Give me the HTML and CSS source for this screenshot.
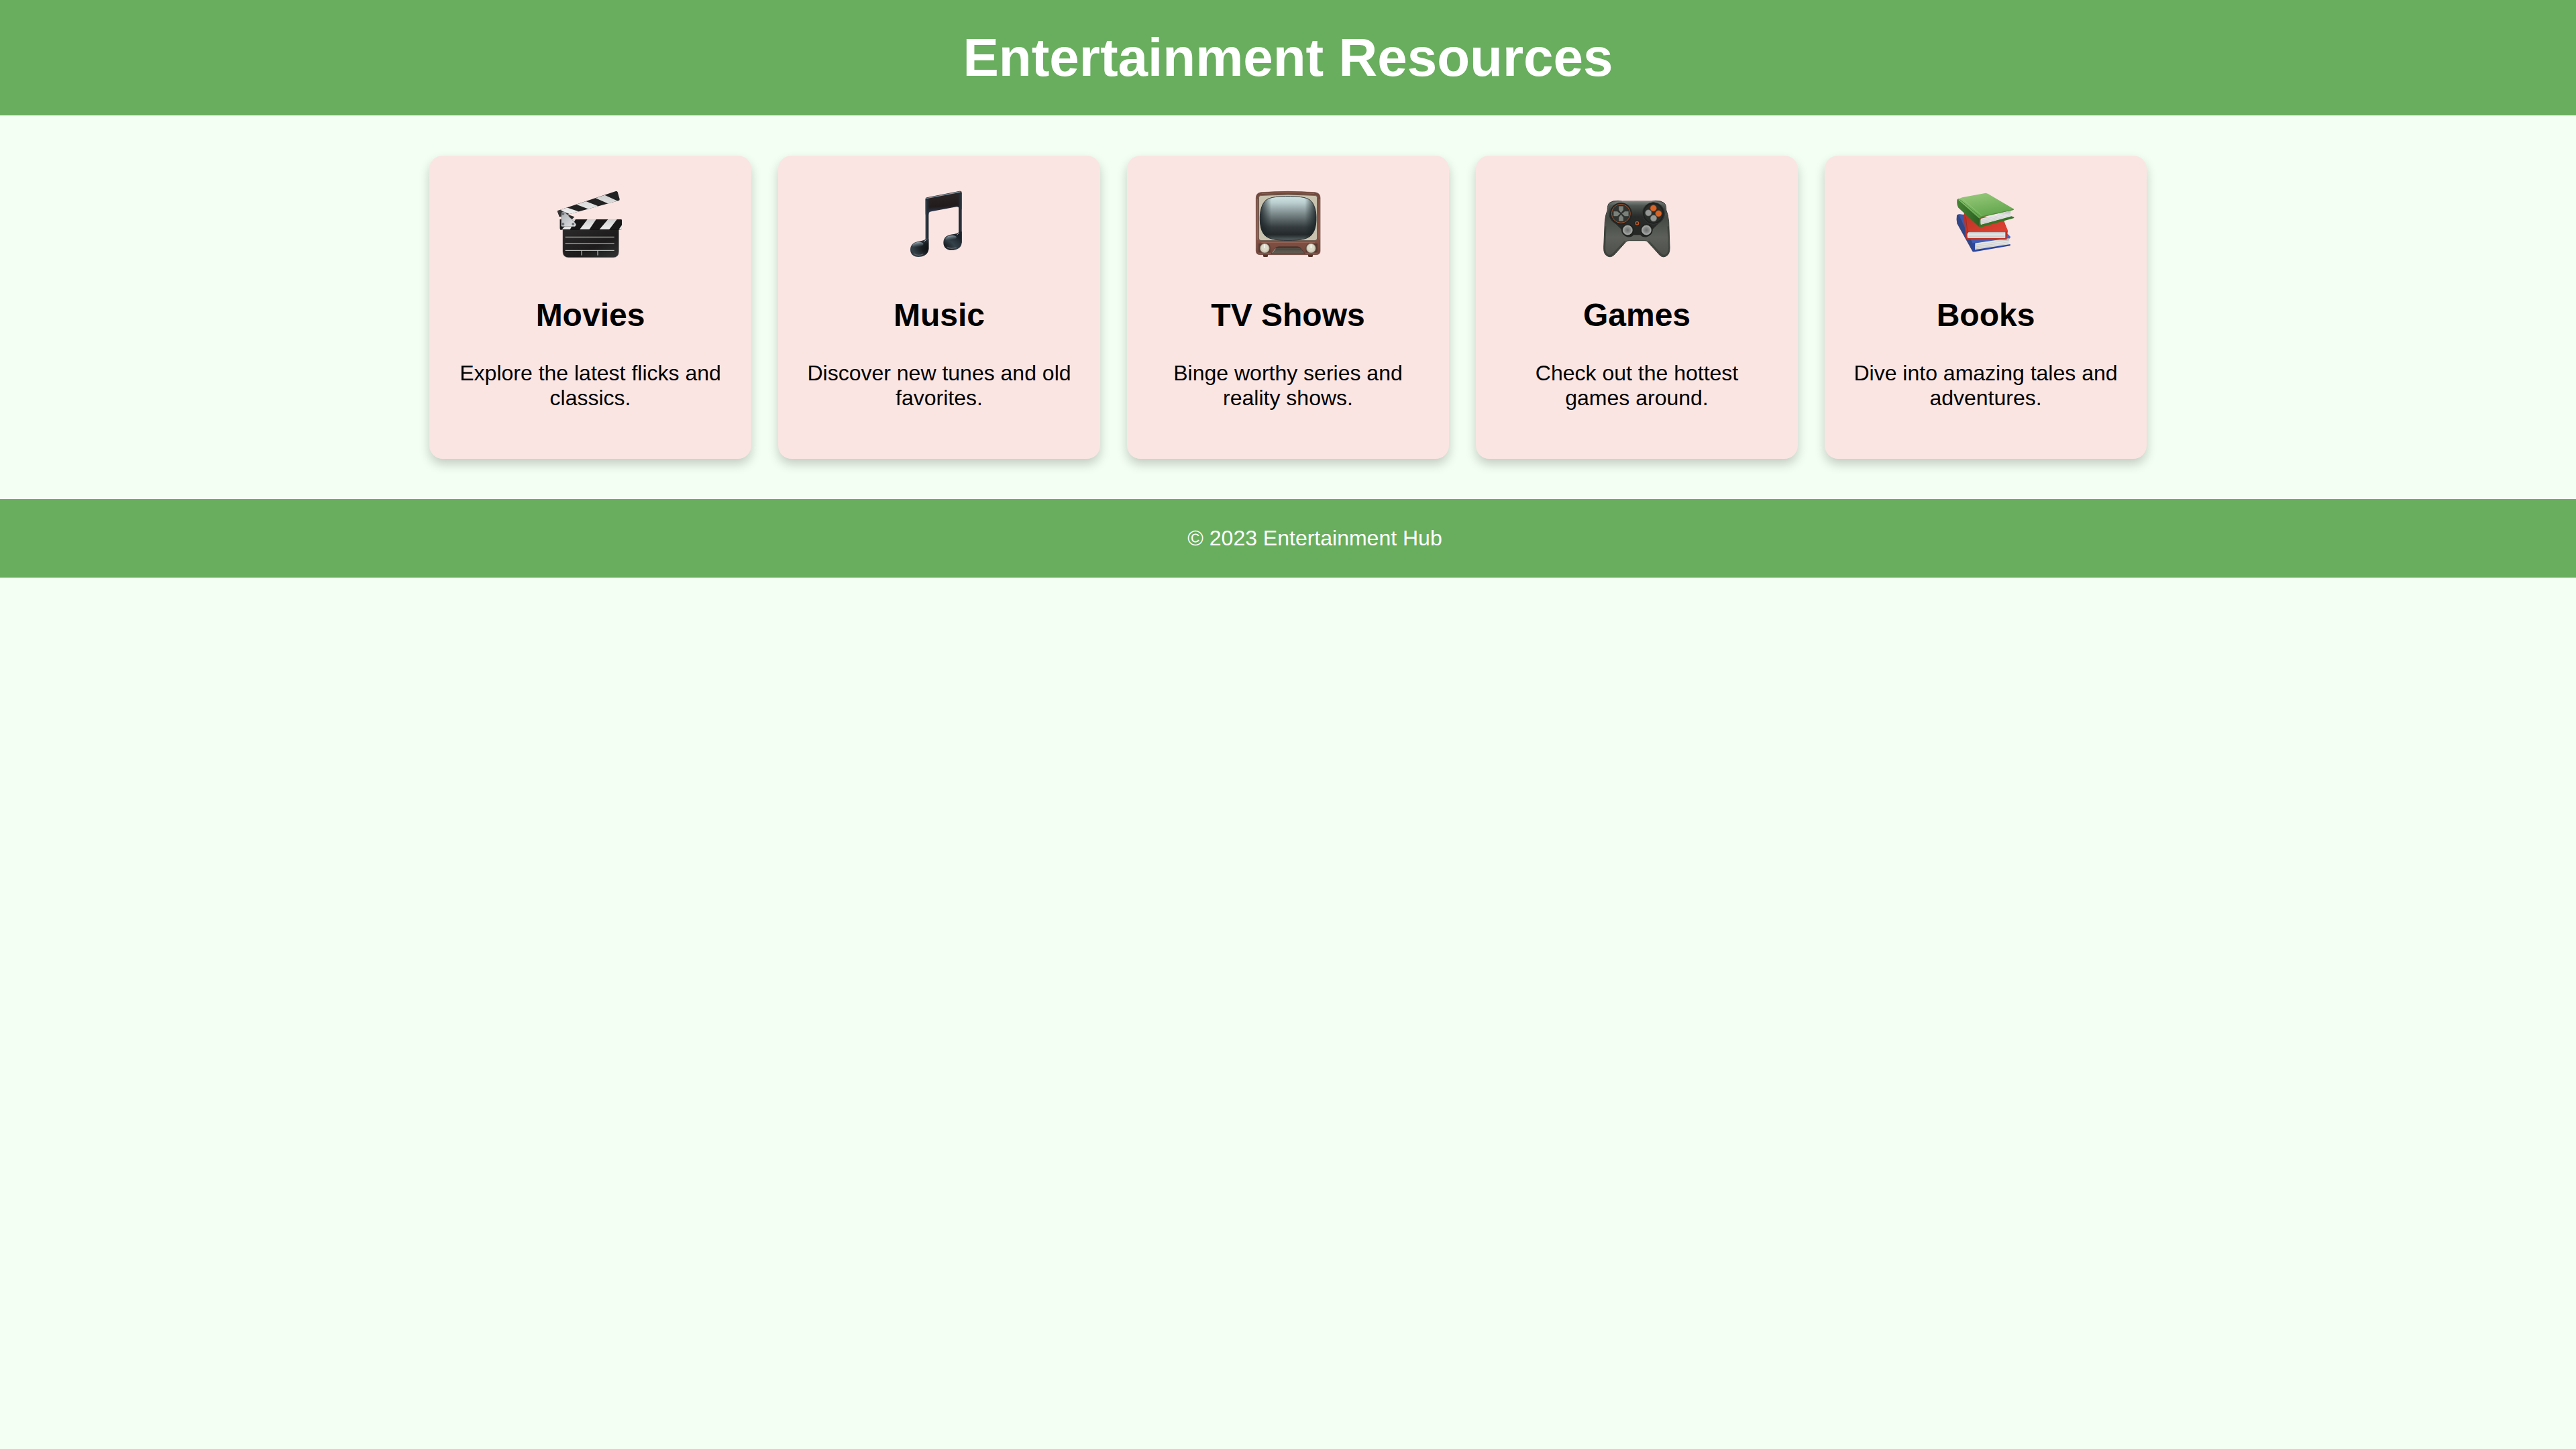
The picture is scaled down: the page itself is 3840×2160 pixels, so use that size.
FILE: index.html
```
<!DOCTYPE html>
<html lang="en">
<head>
<meta charset="utf-8">
<title>Entertainment Resources</title>
<link rel="stylesheet" href="styles.css">
</head>
<body>
<header class="header"><h1 class="header-title">Entertainment Resources</h1></header>
<main class="cards">
  <section class="card">
    <svg class="card-icon" viewBox="0 6 420 390" aria-hidden="true">
      <defs>
        <linearGradient id="stripe" x1="0" y1="0" x2="0" y2="1"><stop offset="0" stop-color="#cfcfcf"/><stop offset="1" stop-color="#f0f0f0"/></linearGradient>
        <linearGradient id="slate" x1="0" y1="0" x2="1" y2="1"><stop offset="0" stop-color="#2b2a2a"/><stop offset=".6" stop-color="#1d1b1b"/><stop offset="1" stop-color="#333"/></linearGradient>
        <linearGradient id="hinge" x1="0" y1="0" x2="1" y2="1"><stop offset="0" stop-color="#a9adb0"/><stop offset="1" stop-color="#e4e6e7"/></linearGradient>
        <clipPath id="arm"><path d="M62 133 324 45Q330 44 332 49L341 80Q342 85 337 87L72 160Z"/></clipPath>
        <clipPath id="bar"><path d="M73 171H347Q351 171 351 175V209Q351 217 344 217H80Q73 217 73 211Z"/></clipPath>
      </defs>
      <g clip-path="url(#arm)">
        <path fill="#222" d="M55 30H350V170H55Z"/>
        <path fill="url(#stripe)" d="M72 129 104 118 162 137 124 150ZM147 104 190 90 245 112 207 127ZM233 76 274 62 333 89 293 102Z"/>
        <path fill="#343434" d="M60 134 80 128 88 163H68Z"/>
      </g>
      <path fill="#292929" d="m112 150 27 10-10 10-17-8Z"/>
      <path fill="url(#slate)" stroke="#555" stroke-width="1.5" d="M87 214H337V315Q337 341 313 341H112Q87 341 87 315Z"/>
      <g clip-path="url(#bar)">
        <path fill="#171717" d="M70 168H354V219H70Z"/>
        <path fill="url(#stripe)" d="M82 217 126 171H144L119 217ZM162 217 197 171H236L205 217ZM250 217 289 171H329L294 217ZM337 217 352 195V217Z"/>
      </g>
      <path fill="none" stroke="#080808" stroke-width="2" d="M75 217H345"/>
      <path fill="url(#hinge)" stroke="#777" stroke-width="1.5" d="M81 144Q82 137 89 137 96 136 100 143L143 188Q148 194 144 200L140 203H84Q80 203 80 199Z"/>
      <g fill="#737779" stroke="#4d5052" stroke-width="1.5"><circle cx="88" cy="146" r="5"/><circle cx="88" cy="192" r="5"/><circle cx="133" cy="192" r="5"/></g>
      <g fill="none" stroke="#d5d9d6" stroke-width="3"><path d="M98 250H317M98 280H317M98 310H317"/><path d="M171 310V332M243 310V332"/></g>
    </svg>
    <h2 class="card-title">Movies</h2>
    <p class="card-text">Explore the latest flicks and classics.</p>
  </section>
  <section class="card">
    <svg class="card-icon" viewBox="0 6 420 390" aria-hidden="true">
      <defs>
        <radialGradient id="note" cx=".45" cy=".65" r=".65"><stop offset="0" stop-color="#090b0d"/><stop offset=".35" stop-color="#171c20"/><stop offset=".65" stop-color="#35424a"/><stop offset="1" stop-color="#1b2229"/></radialGradient>
        <linearGradient id="shine" x1="0" y1="0" x2="0" y2="1"><stop offset="0" stop-color="#91a4ad"/><stop offset=".6" stop-color="#4c5961" stop-opacity=".7"/><stop offset="1" stop-color="#23292e" stop-opacity="0"/></linearGradient>
        <linearGradient id="beam" x1="0" y1="0" x2=".12" y2="1"><stop offset="0" stop-color="#2e2728"/><stop offset=".7" stop-color="#221b1c"/><stop offset=".86" stop-color="#293344"/><stop offset="1" stop-color="#52647a"/></linearGradient>
      </defs>
      <path fill="url(#beam)" d="M149 79Q149 74 155 73L302 44Q311 43 311 51V127H299Q299 113 287 115L175 136Q163 137 163 149H149Z"/>
      <path fill="#232b33" d="M149 78H163V306H149ZM297 54H311V275H297Z"/>
      <path fill="none" stroke="#526472" stroke-width="2.5" d="M151 86V258M309 55V255"/>
      <path fill="none" stroke="#8297a2" stroke-width="4" stroke-linecap="round" d="M153 77 304 48"/>
      <path fill="url(#note)" d="M163 258V303C162 326 143 339 117 339 95 339 81 326 81 306 81 284 97 271 121 269 140 267 149 261 153 256ZM311 226V275C310 296 292 309 265 309 244 309 229 296 229 275 229 252 245 240 270 238 288 236 296 231 301 226Z"/>
      <g fill="url(#shine)"><ellipse cx="115" cy="285" rx="25" ry="12" transform="rotate(-10 115 285)"/><ellipse cx="263" cy="255" rx="25" ry="12" transform="rotate(-10 263 255)"/></g>
      <path fill="none" stroke="#b4c8d1" stroke-width="3" stroke-linecap="round" d="M143 270 152 262M290 240 299 232"/>
      <path fill="none" stroke="#5a5e61" stroke-width="4" stroke-linecap="round" d="M97 325Q115 336 137 327M246 295Q265 306 286 296"/>
    </svg>
    <h2 class="card-title">Music</h2>
    <p class="card-text">Discover new tunes and old favorites.</p>
  </section>
  <section class="card">
    <svg class="card-icon" viewBox="0 6 420 390" aria-hidden="true">
      <defs>
        <linearGradient id="screen" x1="0" y1="0" x2="0" y2="1"><stop offset="0" stop-color="#d1e5e5"/><stop offset=".14" stop-color="#bccfd0"/><stop offset=".4" stop-color="#7b898b"/><stop offset=".7" stop-color="#343b3e"/><stop offset=".87" stop-color="#24292b"/><stop offset="1" stop-color="#596466"/></linearGradient>
        <linearGradient id="vignette"><stop offset="0" stop-color="#182024" stop-opacity=".85"/><stop offset=".2" stop-color="#182024" stop-opacity="0"/><stop offset=".8" stop-color="#182024" stop-opacity="0"/><stop offset="1" stop-color="#182024" stop-opacity=".85"/></linearGradient>
        <linearGradient id="wood" x1="0" y1="0" x2="0" y2="1"><stop offset="0" stop-color="#70483b"/><stop offset=".7" stop-color="#8a5548"/><stop offset="1" stop-color="#70453a"/></linearGradient>
        <linearGradient id="grille" x1="0" y1="0" x2="0" y2="1"><stop offset="0" stop-color="#393631"/><stop offset="1" stop-color="#686156"/></linearGradient>
      </defs>
      <path fill="#553027" d="M99 327H120V336Q120 339 116 339H103Q99 339 99 335ZM300 327H321V335Q321 339 317 339H304Q300 339 300 335Z"/>
      <path fill="url(#wood)" stroke="#66443a" stroke-width="2" d="M67 75Q67 53 89 50Q210 42 331 50Q354 53 354 75V312Q354 329 336 329H85Q67 329 67 312Z"/>
      <path fill="none" stroke="#a47262" stroke-width="2" d="M73 80V263M349 80V263M92 55Q210 47 328 55M77 322H343M91 274H330"/>
      <path fill="#c9c2ae" stroke="#66564a" stroke-width="3" d="M79 74Q79 65 89 64Q210 56 331 64Q341 65 341 74V255Q341 266 330 266H90Q79 266 79 255Z"/>
      <path id="tube" fill="url(#screen)" stroke="#273034" stroke-width="3" d="M210 68C270 68 301 74 316 92 331 111 336 138 336 166 336 198 330 225 314 242 296 260 263 265 210 265 157 265 124 260 106 242 90 225 85 198 85 166 85 138 90 111 105 92 119 74 150 68 210 68Z"/>
      <path fill="url(#vignette)" d="M210 68C270 68 301 74 316 92 331 111 336 138 336 166 336 198 330 225 314 242 296 260 263 265 210 265 157 265 124 260 106 242 90 225 85 198 85 166 85 138 90 111 105 92 119 74 150 68 210 68Z"/>
      <path fill="#563b32" d="M78 279H117Q129 280 131 296V319H86Q78 319 78 311ZM303 279H342V311Q342 319 334 319H290V296Q292 281 303 279Z"/>
      <path fill="url(#grille)" stroke="#4b302a" stroke-width="2" d="M134 325 150 305Q155 293 169 293H252Q265 293 270 305L287 325Z"/>
      <path stroke="#777066" d="M149 309H272M144 316H278M155 302H265"/>
      <path fill="none" stroke="#aaa291" stroke-width="3" d="M140 320 154 302"/>
      <g fill="#d0cab9" stroke="#777061" stroke-width="2"><circle cx="106" cy="300" r="21"/><circle cx="313" cy="300" r="21"/></g>
      <g fill="#dedac9"><circle cx="106" cy="298" r="15"/><circle cx="313" cy="298" r="15"/></g>
      <path stroke="#fff" stroke-width="4" d="M106 283V299M313 283V299"/>
    </svg>
    <h2 class="card-title">TV Shows</h2>
    <p class="card-text">Binge worthy series and reality shows.</p>
  </section>
  <section class="card">
    <svg class="card-icon" viewBox="0 6 420 390" aria-hidden="true">
      <defs>
        <linearGradient id="pad" x1="0" y1="0" x2="0" y2="1"><stop offset="0" stop-color="#656b66"/><stop offset=".3" stop-color="#444943"/><stop offset=".65" stop-color="#5d605a"/><stop offset="1" stop-color="#4b4e49"/></linearGradient>
        <linearGradient id="face" x1="0" y1="0" x2="0" y2="1"><stop offset="0" stop-color="#7b827d"/><stop offset=".12" stop-color="#4f5551"/><stop offset=".42" stop-color="#282b29"/><stop offset="1" stop-color="#252725"/></linearGradient>
        <radialGradient id="stick"><stop offset="0" stop-color="#6b6d6d"/><stop offset=".65" stop-color="#8c8e8d"/><stop offset="1" stop-color="#b0b2b0"/></radialGradient>
      </defs>
      <path fill="url(#pad)" stroke="#3a3e3a" stroke-width="3" stroke-linejoin="round" d="M88 97Q102 87 126 88L145 90H276L294 88Q317 87 331 97 342 105 341 129 350 148 353 182L357 298Q358 329 338 337 320 344 304 322L258 271Q254 266 246 266H175Q167 266 162 271L116 322Q99 343 82 337 61 330 62 298L67 182Q70 148 79 129 78 105 88 97Z"/>
      <path fill="none" stroke="#31362f" stroke-width="7" opacity=".55" d="M70 202 66 298Q66 326 81 332 96 337 110 320L158 269M350 202 354 298Q354 326 339 332 325 337 311 320L262 269"/>
      <path fill="url(#face)" d="M91 102Q110 92 145 91H276Q311 92 330 102 344 126 334 156 328 178 305 192L280 216Q276 243 254 250 235 253 226 241H195Q186 253 167 250 145 243 141 216L116 192Q92 178 86 156 77 126 91 102Z"/>
      <path fill="none" stroke="#818984" stroke-width="3" d="M144 93Q210 89 277 93"/>
      <circle cx="139" cy="145" r="49" fill="#222523"/><circle cx="139" cy="145" r="42" fill="#303330" stroke="#a3512b" stroke-width="3"/>
      <circle cx="284" cy="144" r="49" fill="#1e211f" stroke="#343835" stroke-width="3"/><circle cx="284" cy="144" r="41" fill="#292d2a"/>
      <path fill="#7b807a" stroke="#202320" stroke-width="2" d="M128 111H151V129L139 143 128 129ZM128 180H151V162L139 148 128 162ZM105 134H123L137 146 123 158H105ZM174 134H156L142 146 156 158H174Z"/>
      <g fill="#959895" stroke="#626562" stroke-width="2"><circle cx="262" cy="142" r="14"/><circle cx="285" cy="166" r="14"/></g>
      <g fill="#d86428" stroke="#924019" stroke-width="2"><circle cx="284" cy="121" r="14"/><circle cx="307" cy="145" r="14"/></g>
      <circle cx="211" cy="188" r="13" fill="#202320"/><circle cx="211" cy="188" r="7" fill="#333" stroke="#bc5929" stroke-width="4"/>
      <circle cx="169" cy="219" r="28" fill="#202320"/><circle cx="253" cy="219" r="28" fill="#202320"/>
      <g fill="url(#stick)" stroke="#a4a7a4" stroke-width="2"><circle cx="169" cy="219" r="21"/><circle cx="253" cy="219" r="21"/></g>
    </svg>
    <h2 class="card-title">Games</h2>
    <p class="card-text">Check out the hottest games around.</p>
  </section>
  <section class="card">
    <svg class="card-icon" viewBox="0 6 420 390" aria-hidden="true">
      <defs>
        <linearGradient id="green" x1="0" y1="0" x2=".35" y2="1"><stop offset="0" stop-color="#9acb7e"/><stop offset="1" stop-color="#61a54b"/></linearGradient>
        <linearGradient id="greenSpine"><stop offset="0" stop-color="#478434"/><stop offset="1" stop-color="#285d20"/></linearGradient>
        <linearGradient id="red" x1="0" y1="0" x2="1" y2="1"><stop offset="0" stop-color="#b93426"/><stop offset="1" stop-color="#e14232"/></linearGradient>
        <linearGradient id="pages" x1="0" y1="0" x2="0" y2="1"><stop offset="0" stop-color="#b3b3b3"/><stop offset=".3" stop-color="#e9e9e9"/><stop offset="1" stop-color="#d4d4d4"/></linearGradient>
        <linearGradient id="blue"><stop offset="0" stop-color="#3d57a9"/><stop offset="1" stop-color="#4667cb"/></linearGradient>
      </defs>
      <path fill="#314686" d="M81 153Q84 148 92 148L120 151 164 276 156 317 151 314 82 190Q78 170 81 153Z"/>
      <path fill="url(#blue)" d="M89 149 121 151 298 226 322 250 316 257 164 279Q157 279 155 285Z"/>
      <path fill="url(#pages)" d="M160 278 315 255 317 286 158 308Z"/>
      <path fill="none" stroke="#aaa" d="M164 286 313 264M164 294 313 272M163 302 313 280"/>
      <path fill="#2a46a1" d="M151 282Q153 275 163 275L162 307 320 282V289L162 316Q153 317 151 309Z"/>
      <path fill="#bd3124" d="M116 137 292 178 309 224 302 260H127Q121 258 120 248L112 151Z"/>
      <path fill="url(#red)" d="M123 137 289 178 309 220 304 225H137Q127 225 126 236L117 153Z"/>
      <path fill="url(#pages)" d="M132 227H298V255H130Q124 239 132 227Z"/>
      <path stroke="#b5b5b5" d="M134 234H294M134 241H294M134 248H294"/>
      <path fill="none" stroke="#c13225" stroke-width="5" d="M136 225Q124 227 124 239V253M125 259H304M298 255 304 259"/>
      <path fill="none" stroke="#8e261d" stroke-width="2" d="m121 160 8 72"/>
      <path fill="url(#greenSpine)" d="M82 84Q84 78 91 79L184 153 192 200 181 205 88 119Q80 107 82 84Z"/>
      <path fill="url(#green)" d="M91 79 105 73 211 53 221 57 337 125 332 130 190 162Q185 164 182 168L88 84Z"/>
      <path fill="none" stroke="#4a8d38" stroke-width="3" d="M94 82 187 160 335 127"/>
      <path fill="none" stroke="#a5d38d" stroke-width="1.5" d="M102 76 193 155"/>
      <path fill="url(#pages)" d="M188 168 322 132Q319 147 325 158L188 196Q183 180 188 168Z"/>
      <path fill="none" stroke="#b9b9b9" d="M190 175 321 140M190 182 321 146M190 189 321 153"/>
      <path fill="#357627" d="M181 165H187V196L326 157 338 162 335 166 188 206Q181 207 179 202Z"/>
    </svg>
    <h2 class="card-title">Books</h2>
    <p class="card-text">Dive into amazing tales and adventures.</p>
  </section>
</main>
<footer class="footer"><p class="footer-text">© 2023 Entertainment Hub</p></footer>
</body>
</html>
```
FILE: styles.css
```
body {
  margin: 0;
  background: #f4fff3;
  color: #000;
  font: 32px/37px "Liberation Sans", Arial, sans-serif;
}

.header,
.footer {
  background: #69ae5e;
  color: #fff;
  text-align: center;
}

.header {
  padding: 40px;
}

.header-title {
  margin: 0;
  font-size: 80px;
  line-height: 92px;
}

.cards {
  display: flex;
  justify-content: center;
  gap: 40px;
  padding: 60px 40px;
}

.card {
  box-sizing: border-box;
  width: 480px;
  padding: 40px;
  border-radius: 20px;
  background: #fae5e3;
  box-shadow: 0 8px 16px rgba(0, 0, 0, 0.2);
  text-align: center;
}

.card-icon {
  display: block;
  width: 140px;
  height: 130px;
  margin: 0 auto 40px;
}

.card-title {
  margin: 0 0 40px;
  font-size: 48px;
  line-height: 56px;
}

.card-text {
  margin: 0 0 32px;
}

.footer {
  padding: 40px 0 40px 80px;
}

.footer-text {
  margin: 0;
}
```
